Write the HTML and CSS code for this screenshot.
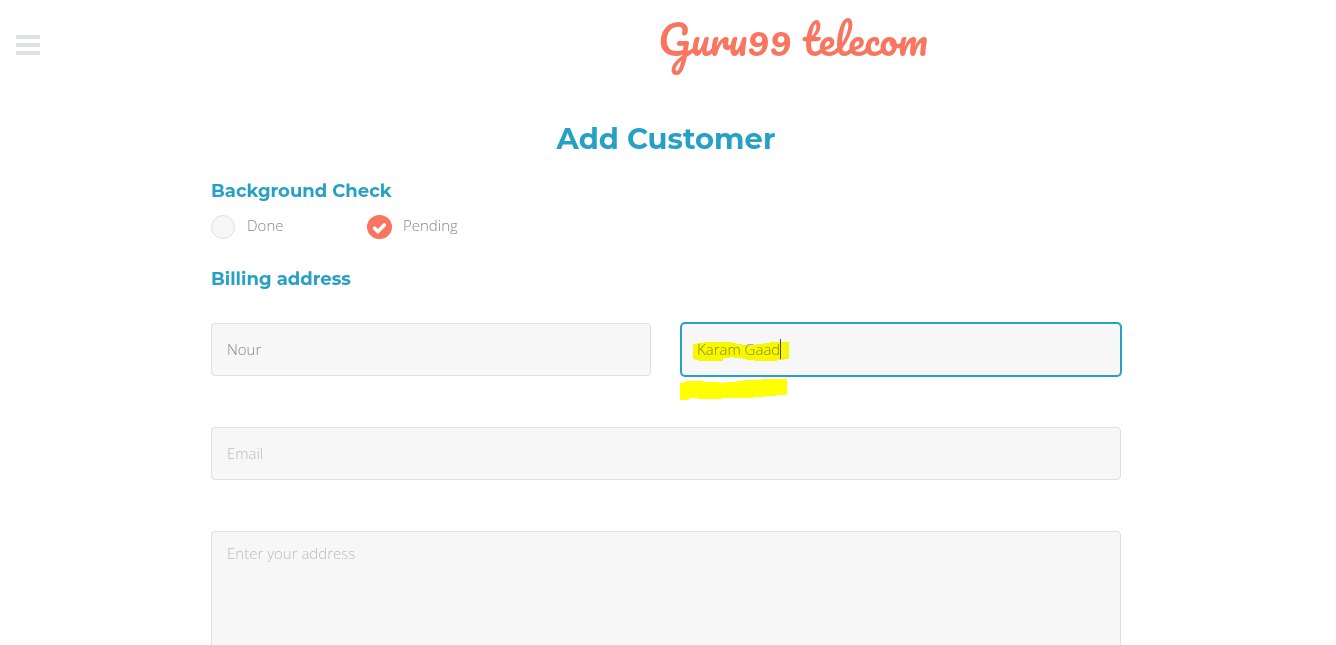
FILE: index.html
```html
<!DOCTYPE html>
<html lang="en">
<head>
<meta charset="utf-8">
<meta name="viewport" content="width=device-width, initial-scale=1">
<title>Add Customer</title>
<link rel="stylesheet" href="styles.css">
</head>
<body>
<header class="header">
  <button class="menu" type="button" aria-label="Menu">
    <svg width="24" height="20" viewBox="0 0 24 20" fill="#dee1e3" aria-hidden="true"><path d="M0 0h24v4H0zM0 8h24v4H0zM0 16h24v4H0z"/></svg>
  </button>
  <a class="logo" href="#">Guru99 telecom</a>
</header>
<main class="main">
  <h1 class="title">Add Customer</h1>
  <form class="form">
    <h2 class="heading" id="check-heading">Background Check</h2>
    <div class="choices" role="radiogroup" aria-labelledby="check-heading">
      <label class="choice"><span class="dot"><input type="radio" name="check"></span>Done</label>
      <label class="choice"><span class="dot"><input type="radio" name="check" checked><svg class="tick" width="25" height="25" viewBox="0 0 25 25" aria-hidden="true"><path d="M7.6 13.2l3.3 3.3 6.4-6.6" fill="none" stroke="#fff" stroke-width="3.6" stroke-linecap="round"/></svg></span>Pending</label>
    </div>
    <h2 class="heading">Billing address</h2>
    <div class="fields">
      <input class="field" type="text" value="Nour" aria-label="First name">
      <div class="marked">
        <input class="field active" type="text" value="Karam Gaad" aria-label="Last name">
        <svg class="marker" width="110" height="80" viewBox="0 0 110 80" aria-hidden="true">
          <g fill="#ff0">
            <path d="M13 22V21H17V20H24V19H52V20H56V21H62V22H76V21H84V20H90V19H109V36H104V37H97V38H74V37H67V36H62V35H54V34H50V35H43V38H19V37H15V36H13z"/>
            <path d="M0 61V60H3V59H6V58H23V59H39V60H46V59H57V58H64V57H82V56H107V72H96V73H85V74H73V75H42V76H17V75H9V77H0z"/>
          </g>
          <path class="caret" d="M100 16h1v20h-1z"/>
        </svg>
      </div>
      <input class="field wide" type="email" placeholder="Email" aria-label="Email">
      <textarea class="field wide area" placeholder="Enter your address" aria-label="Address"></textarea>
    </div>
  </form>
</main>
</body>
</html>
```
FILE: styles.css
```css
* { box-sizing: border-box; }

body {
  margin: 0;
  background: #fff;
  color: #888;
  font: 300 15px/24px "Open Sans", sans-serif;
}

.header {
  display: grid;
  grid-template-columns: 1fr 1fr;
  align-items: center;
  height: 90px;
  padding: 0 16px;
}

.menu {
  display: flex;
  justify-self: start;
  padding: 0;
  border: 0;
  background: none;
}

.logo {
  justify-self: start;
  margin-left: -10px;
  padding-bottom: 12px;
  color: #f8765f;
  font: 400 41px/70px "Pacifico", cursive;
  text-decoration: none;
}

.main {
  max-width: 942px;
  margin: 0 auto;
  padding: 25px 18px 24px 14px;
}

.title,
.heading {
  margin: 0;
  color: #27a0c5;
  font-family: "Montserrat", "Inter", sans-serif;
  font-weight: 700;
}

.title {
  font-size: 29px;
  line-height: 48px;
  text-align: center;
}

.heading {
  margin-top: 16px;
  font-size: 18px;
  line-height: 24px;
}

.choices {
  display: flex;
  margin-bottom: 28px;
  padding-top: 12px;
  line-height: 20px;
}

.choice {
  display: flex;
  gap: 11px;
  width: 156px;
}

.dot {
  position: relative;
  display: flex;
  width: 25px;
  height: 24px;
}

.dot input {
  appearance: none;
  width: 24px;
  height: 24px;
  margin: 0;
  border: 1px solid #dedfe0;
  border-radius: 50%;
  background: #f7f7f7;
}

.dot input:checked {
  width: 25px;
  border-color: #f8765f;
  background: #f8765f;
}

.tick {
  position: absolute;
  inset: 0;
  pointer-events: none;
}

.fields {
  display: grid;
  grid-template-columns: 1fr 1fr;
  gap: 51px 30px;
  padding-top: 32px;
}

.field {
  display: block;
  width: 100%;
  height: 53px;
  padding: 0 15px 2px;
  border: 1px solid #dedfe0;
  border-radius: 4px;
  outline: 0;
  background: #f7f7f7;
  color: #888;
  font: inherit;
}

.field::placeholder {
  color: #bbb;
  opacity: 1;
}

.active {
  border-color: #27a0c5;
  box-shadow: 0 0 0 1px #27a0c5;
}

.wide { grid-column: 1 / -1; }

.area {
  height: 160px;
  padding-top: 9px;
  resize: none;
}

.marked { position: relative; }

.marker {
  position: absolute;
  top: 0;
  left: -1px;
  mix-blend-mode: multiply;
  pointer-events: none;
}

.caret { fill: #444; }
```
